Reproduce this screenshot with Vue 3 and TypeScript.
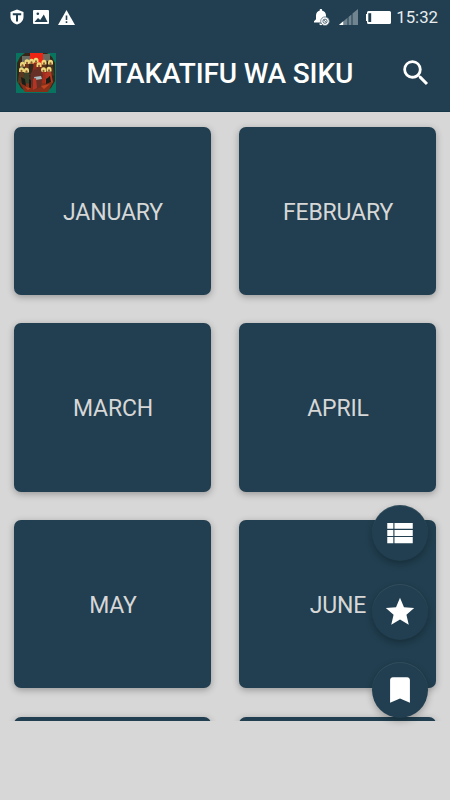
<script setup lang="ts">
interface Figure { x: number; y: number; robe: string }

const months: string[] = ['JANUARY', 'FEBRUARY', 'MARCH', 'APRIL', 'MAY', 'JUNE', 'JULY', 'AUGUST']

const actions: { name: string; path: string }[] = [
  { name: 'List', path: 'M3 9.050h4.300V4.900H3zM3 14.050h4.300V9.900H3zM3 19.200h4.300V14.900H3zM8.100 9.050H21V4.900H8.100zM8.100 14.050H21V9.900H8.100zM8.100 19.200H21V14.900H8.100z' },
  { name: 'Favourites', path: 'M12 17.27L18.18 21l-1.64-7.03L22 9.24l-7.19-.61L12 2 9.19 8.63 2 9.24l5.46 4.73L5.82 21z' },
  { name: 'Bookmarks', path: 'M17 3H7c-1.1 0-1.99.9-1.99 2L5 21l7-3 7 3V5c0-1.1-.9-2-2-2z' },
]

const figures: Figure[] = [
  { x: 11, y: 9, robe: '#6f351b' },
  { x: 15.5, y: 8.5, robe: '#302b20' },
  { x: 20, y: 7.5, robe: '#8f2c1c' },
  { x: 28, y: 9.5, robe: '#57301c' },
  { x: 34.5, y: 9.5, robe: '#4a3422' },
  { x: 6.5, y: 11.5, robe: '#283422' },
  { x: 23, y: 12, robe: '#6d2d20' },
  { x: 5.5, y: 17, robe: '#5a3720' },
  { x: 10.5, y: 17.5, robe: '#39432c' },
  { x: 27.5, y: 17, robe: '#a32c1c' },
  { x: 33, y: 16.5, robe: '#b43a20' },
]
</script>

<template>
  <div class="screen">
    <div class="status">
      <div class="notices">
        <svg width="14" height="16" viewBox="0 0 14 16">
          <path d="M7 .5 13.500 3v5c0 3.800-3 6.400-6.500 7.500C3.500 14.400.5 11.800.5 8V3z" fill="#fff" />
          <path d="M2.800 4.300h8.400v2H8v6.200H6V6.300H2.800z" fill="#213f50" />
        </svg>
        <svg width="16" height="14" viewBox="0 0 16 14">
          <rect width="16" height="14" rx="1" fill="#fff" />
          <path d="M1.500 12 5 8l2.200 2 3.600-5.500L14.500 12z" fill="#213f50" />
          <circle cx="4.800" cy="3.800" r="1.300" fill="#213f50" />
        </svg>
        <svg width="17" height="15" viewBox="0 0 17 15">
          <path d="M8.500 0 17 15H0z" fill="#fff" />
          <path d="M7.700 5.500h1.600v4.500H7.700zM7.700 11.300h1.600V13H7.700z" fill="#213f50" />
        </svg>
      </div>
      <div class="system">
        <svg class="bell" width="16" height="17" viewBox="0 0 16 17">
          <path d="M0 13.500v-1.200l2-2V6.500C2 4 3.500 2.300 5.600 1.800V1.200a1.300 1.300 0 0 1 2.600 0v.6C10.400 2.300 12 4 12 6.500v3.800l2 2v1.200zM5.300 14.500h3.400c0 1-.7 1.700-1.700 1.700s-1.700-.7-1.700-1.700z" fill="#fff" />
          <circle cx="11" cy="12.200" r="4.300" fill="#fff" stroke="#536b78" stroke-width=".8" />
          <circle cx="11" cy="12.200" r="2.100" fill="none" stroke="#536b78" />
          <path d="m9.500 10.700 3 3" stroke="#536b78" />
        </svg>
        <svg class="signal" width="19" height="16" viewBox="0 0 19 16">
          <path d="M0 16 4 12.600V16zM5 11.800l3.500-3V16H5zM9.500 8l3-2.600V16h-3zM13.500 4.600 19 0v16h-5.500z" fill="#718590" />
          <path d="M0 16 4.500 12v4z" fill="#fff" />
        </svg>
        <svg class="battery" width="25" height="13" viewBox="0 0 25 13">
          <path d="M2.500 0h21A1.500 1.500 0 0 1 25 1.500v10a1.500 1.500 0 0 1-1.500 1.500h-21A1.500 1.500 0 0 1 1 11.500V10H0V3h1V1.500A1.500 1.500 0 0 1 2.500 0z" fill="#fff" />
          <path d="M2.300 2.200H5.200v8.800H2.300z" fill="#213f50" />
        </svg>
        <span class="clock">15:32</span>
      </div>
    </div>

    <header class="bar">
      <svg class="emblem" width="40" height="40" viewBox="0 0 40 40">
        <rect width="40" height="40" fill="#08735e" />
        <path d="M9 0h22l5 4 3 6v18l-4 7-6 4H11l-6-4-4-7V10l3-6z" fill="#38251a" />
        <path d="M6 3h8v7H6zM27 1h7v7h-7z" fill="#6b6a60" />
        <path d="M14 0h13v15H14z" fill="#f02412" />
        <path d="M3 29h34l-5 10H9z" fill="#86301a" />
        <g v-for="figure in figures" :key="`${figure.x}-${figure.y}`">
          <path :d="`M${figure.x - 2} ${figure.y + 2}h4l2 11h-8z`" :fill="figure.robe" />
          <path :d="`M${figure.x - 2.5} ${figure.y + 2}v-2a2.500 2.800 0 0 1 5 0v2z`" fill="#ecd77c" />
          <ellipse :cx="figure.x" :cy="figure.y + 1" rx="1" ry="1.300" fill="#8a5a35" />
        </g>
        <path d="m15 20 4-4 6 1 2 5-2 12-7 3-4-9z" fill="#673026" />
        <path d="m18 24 7-1 1 3-7 1z" fill="#a9bcc0" />
        <path d="m5 24 4 2 1 7-4-2zM13 26l2 1v8l-2 1zM30 25l4-2 1 6-5 2z" fill="#191d17" />
        <path d="m9 34 6 1-3 2zM25 33l9-2-6 5z" fill="#bf4520" />
        <path d="m17 26 3-1 1 10-4 2zM29 20l3-1 1 5-3 2z" fill="#b33424" />
      </svg>
      <h1 class="title">MTAKATIFU WA SIKU</h1>
      <svg class="search" width="34" height="34" viewBox="0 0 24 24" role="img" aria-label="Search">
        <path d="M15.500 14h-.79l-.28-.27A6.471 6.471 0 0 0 16 9.500 6.500 6.500 0 1 0 9.500 16c1.610 0 3.090-.59 4.230-1.570l.27.28v.79l5 4.990L20.490 19l-4.990-5zm-6 0C7.010 14 5 11.990 5 9.500S7.010 5 9.500 5 14 7.010 14 9.500 11.990 14 9.500 14z" fill="#fff" />
      </svg>
    </header>

    <main class="months">
      <button v-for="month in months" :key="month" class="month">{{ month }}</button>
    </main>

    <nav class="actions">
      <button v-for="action in actions" :key="action.name" class="action" :aria-label="action.name">
        <svg width="34" height="34" viewBox="0 0 24 24"><path :d="action.path" fill="#fff" /></svg>
      </button>
    </nav>
  </div>
</template>

<style>
body { margin: 0; background: #d7d7d7; }
</style>

<style scoped>
.screen {
  position: relative;
  display: flex;
  flex-direction: column;
  width: 450px;
  height: 800px;
  overflow: hidden;
  background: #d7d7d7;
  font-family: Roboto, "Liberation Sans", sans-serif;
}
.screen svg { display: block; flex: none; }
.status {
  display: flex;
  justify-content: space-between;
  box-sizing: border-box;
  height: 34px;
  padding: 0 12px 0 10px;
  background: #213f50;
}
.notices, .system { display: flex; align-items: center; height: 34px; }
.notices { gap: 9px; }
.bell { margin-right: 9px; }
.signal { margin-right: 8px; }
.battery { margin-right: 5px; }
.clock { color: #e8ecee; font-size: 16.800px; line-height: 34px; }
.bar {
  display: flex;
  align-items: center;
  box-sizing: border-box;
  height: 78px;
  padding: 0 17px 0 16px;
  background: #213f50;
  border-bottom: 1px solid #16364a;
}
.title {
  flex: 1;
  margin: 0 0 0 30.500px;
  padding-top: 2px;
  color: #fff;
  font-size: 28px;
  font-weight: 500;
  letter-spacing: -0.150px;
  line-height: 40px;
  white-space: nowrap;
}
.months {
  display: grid;
  grid-template-columns: 197px 197px;
  grid-auto-rows: 168.500px;
  gap: 28.200px 28px;
  box-sizing: border-box;
  height: 609px;
  padding: 14.500px 14px 0;
  overflow: hidden;
}
.month {
  padding: 3px 0 0 1px;
  border: 0;
  border-radius: 7px;
  background: #213f50;
  box-shadow: 0 2px 7px rgba(0, 0, 0, 0.3);
  color: #d7d7d7;
  font-family: inherit;
  font-size: 23px;
  letter-spacing: -0.150px;
}
.actions {
  position: absolute;
  top: 505px;
  right: 22.500px;
  display: flex;
  flex-direction: column;
  gap: 22.500px;
}
.action {
  display: flex;
  align-items: center;
  justify-content: center;
  width: 56px;
  height: 56px;
  padding: 0;
  border: 0;
  border-radius: 50%;
  background: #213f50;
  box-shadow: 0 3px 7px rgba(0, 0, 0, 0.27), inset 0 1px 0 rgba(255, 255, 255, 0.08);
}
</style>
